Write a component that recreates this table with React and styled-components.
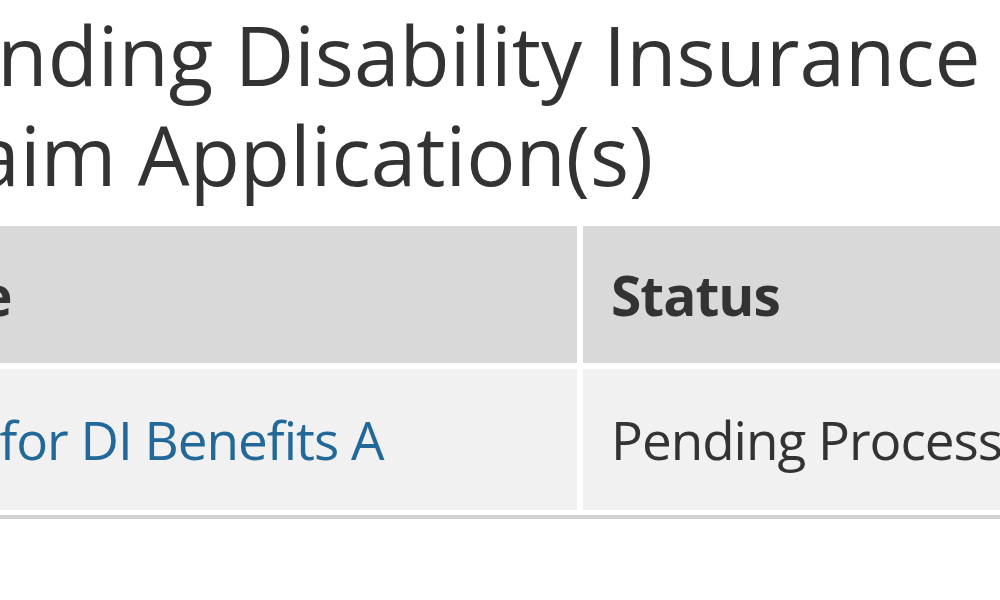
import styled, { createGlobalStyle } from "styled-components";

const Global = createGlobalStyle`
  html, body {
    margin: 0;
    padding: 0;
    background: #ffffff;
    overflow: hidden;
  }
  body {
    font-family: "Open Sans", "Noto Sans", sans-serif;
    color: #333333;
  }
`;

const Page = styled.main`
  width: 1200px;
  padding-top: 4px;
`;

const Titulo = styled.h1`
  margin: 0 0 0 -98px;
  font-size: 82px;
  line-height: 100px;
  font-weight: 400;
  color: #333333;
`;

const Tabela = styled.div`
  margin: 22px 0 0 -307px;
  display: grid;
  grid-template-columns: 884px 700px;
  column-gap: 6px;
  row-gap: 6px;
  padding-bottom: 5px;
  border-bottom: 4px solid #d2d2d2;
`;

const Celula = styled.div`
  display: flex;
  align-items: center;
  height: ${(p) => (p.$cabecalho ? "137px" : "141px")};
  padding: 0 28px;
  background: ${(p) => (p.$cabecalho ? "#d9d9d9" : "#f1f1f1")};
  font-size: ${(p) => (p.$cabecalho ? "55px" : "53px")};
  font-weight: ${(p) => (p.$cabecalho ? 700 : 400)};
  color: #333333;
  white-space: nowrap;
  letter-spacing: -1px;
`;

const Link = styled.a`
  color: #22699a;
  text-decoration: none;
`;

export default function App() {
    return (
        <Page>
            <Global />
            <Titulo>
                Pending Disability Insurance
                <br />
                Claim Application(s)
            </Titulo>
            <Tabela>
                <Celula $cabecalho>Claim Type</Celula>
                <Celula $cabecalho>Status</Celula>
                <Celula>
                    <Link href="#">Application for DI Benefits A</Link>
                </Celula>
                <Celula>Pending Processing</Celula>
            </Tabela>
        </Page>
    );
}
